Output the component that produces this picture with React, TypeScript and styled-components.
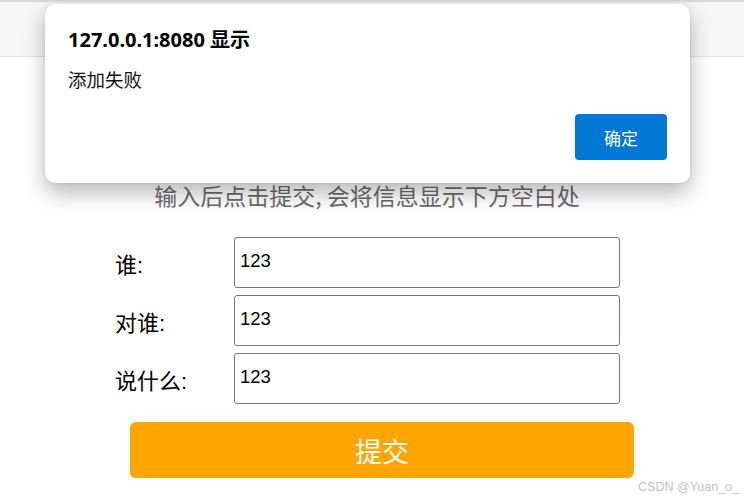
import React from "react";
import styled, { createGlobalStyle } from "styled-components";

const Global = createGlobalStyle`
  html, body { margin: 0; padding: 0; background: #ffffff; }
  body { width: 744px; height: 500px; overflow: hidden; font-family: "Noto Sans CJK SC", "Noto Sans", sans-serif; }
  * { box-sizing: border-box; }
`;

const Page = styled.div`
  position: relative;
  width: 744px;
  height: 500px;
  background: #fff;
  overflow: hidden;
`;

const TopBar = styled.div`
  height: 57px;
  background: #f6f6f6;
  border-top: 2px solid #d9d9d9;
  border-bottom: 1px solid #e3e3e3;
`;

const Main = styled.main`
  display: flex;
  flex-direction: column;
  align-items: center;
  padding-top: 122px;
`;

const Subtitle = styled.div`
  font-family: "Noto Sans CJK SC", sans-serif;
  font-size: 23px;
  line-height: 33px;
  color: #6b6b6b;
  margin-left: -10px;
`;

const Form = styled.form`
  display: flex;
  flex-direction: column;
  gap: 7px;
  margin-top: 25px;
  width: 744px;
  padding-left: 115px;
`;

const Row = styled.div`
  display: flex;
  align-items: center;
`;

const Label = styled.label`
  width: 119px;
  font-family: "Liberation Sans", "Noto Sans CJK SC", sans-serif;
  font-size: 22px;
  color: #000;
`;

const Input = styled.input`
  width: 386px;
  height: 51px;
  border: 1px solid #767676;
  border-radius: 3px;
  padding: 0 0 3px 5px;
  font-family: "Liberation Sans", Arial, sans-serif;
  font-size: 18.5px;
  color: #000;
  background: #fff;
  outline: none;
`;

const Submit = styled.button`
  margin-top: 11px;
  margin-left: 15px;
  width: 504px;
  height: 56px;
  border: none;
  border-radius: 6px;
  background: #ffa500;
  color: #fff;
  font-family: "Noto Sans CJK SC", sans-serif;
  font-size: 27px;
  cursor: pointer;
`;

const Dialog = styled.div`
  position: absolute;
  left: 45px;
  top: 4px;
  width: 645px;
  height: 179px;
  background: #fff;
  border-radius: 10px;
  box-shadow: 0 10px 22px rgba(0, 0, 0, 0.28), 0 0 3px rgba(0, 0, 0, 0.12);
  padding: 24px 23px 23px 23px;
  display: flex;
  flex-direction: column;
`;

const DialogTitle = styled.div`
  font-family: "Noto Sans", "Noto Sans CJK SC", sans-serif;
  font-weight: 700;
  font-size: 20px;
  line-height: 24px;
  color: #000;
`;

const DialogMessage = styled.div`
  margin-top: 15px;
  font-family: "Noto Sans CJK SC", sans-serif;
  font-size: 18.5px;
  line-height: 24px;
  color: #111;
`;

const DialogActions = styled.div`
  margin-top: auto;
  display: flex;
  justify-content: flex-end;
`;

const OkButton = styled.button`
  width: 92px;
  height: 46px;
  border: none;
  border-radius: 4px;
  background: #0078d4;
  color: #fff;
  font-family: "Noto Sans CJK SC", sans-serif;
  font-size: 17px;
  cursor: pointer;
`;

const Watermark = styled.div`
  position: absolute;
  right: 5px;
  bottom: 6px;
  font-family: "Liberation Sans", Arial, sans-serif;
  font-size: 12.5px;
  color: #c4c4c4;
`;

const fields = [
  { label: "谁:", value: "123" },
  { label: "对谁:", value: "123" },
  { label: "说什么:", value: "123" },
];

export default function App() {
  return (
    <Page>
      <Global />
      <TopBar />
      <Main>
        <Subtitle>输入后点击提交, 会将信息显示下方空白处</Subtitle>
        <Form onSubmit={(e) => e.preventDefault()}>
          {fields.map((f) => (
            <Row key={f.label}>
              <Label>{f.label}</Label>
              <Input defaultValue={f.value} />
            </Row>
          ))}
          <Submit type="submit">提交</Submit>
        </Form>
      </Main>
      <Dialog>
        <DialogTitle>127.0.0.1:8080 显示</DialogTitle>
        <DialogMessage>添加失败</DialogMessage>
        <DialogActions>
          <OkButton>确定</OkButton>
        </DialogActions>
      </Dialog>
      <Watermark>CSDN @Yuan_o_</Watermark>
    </Page>
  );
}
